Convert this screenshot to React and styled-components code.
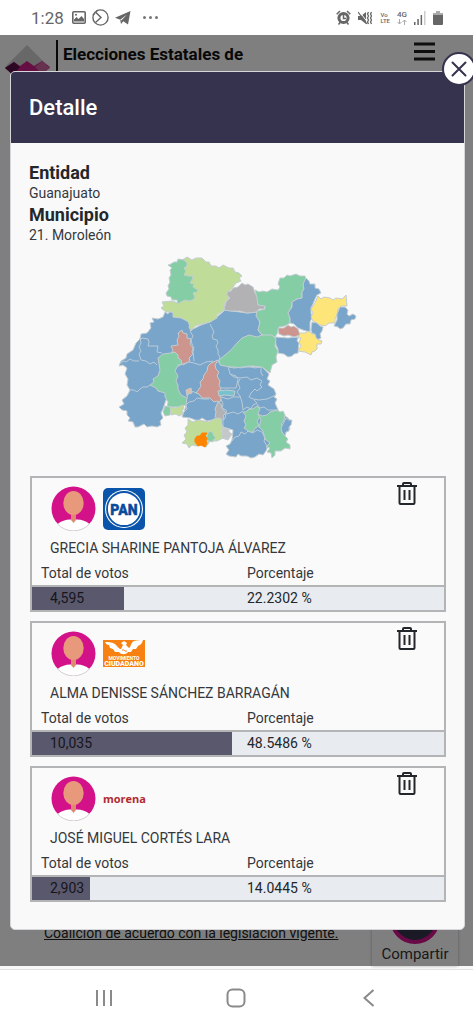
import React from "react";
import { useState } from "react";
import styled, { createGlobalStyle } from "styled-components";

const blue = "#78a5c9";
const green = "#84cda5";
const lime = "#bfdc98";
const gray = "#b2b1b3";
const red = "#cc958d";
const yellow = "#fee57a";

const regions = [
  // western and central block, borders are drawn over it
  { fill: blue, points: "165,312 168,314 170,311 173,313 177,317 181,317 188,321 191,330 201,325 210,322 217,317 225,310 232,311 247,313 257,312 259,320 260,324 258,330 262,335 245,345 230,352 221,365 243,367 262,367 269,374 267,379 270,381 268,385 274,389 276,394 274,397 277,399 275,403 279,412 288,418 292,422 289,425 290,429 286,431 285,435 275,440 268,446 266,451 263,455 259,454 255,457 251,458 247,456 241,456 238,454 236,457 229,456 226,454 229,450 226,446 230,444 232,440 233,430 223,427 219,418 212,420 207,421 202,418 198,421 190,418 182,417 186,406 176,400 166,400 163,409 161,413 163,418 160,421 161,425 157,427 152,426 147,427 144,424 138,427 135,427 133,422 128,421 130,418 127,415 127,411 122,410 119,407 124,404 122,400 127,396 130,390 127,385 128,379 125,374 127,368 123,365 119,366 121,361 126,358 127,354 133,350 136,343 140,339 141,334 147,333 151,328 150,323 154,322 152,318 158,319 163,317" },
  { fill: lime, points: "178,261 184,259 187,257 192,260 196,258 202,258 206,262 209,262 211,266 216,266 219,268 223,265 229,268 233,268 235,272 239,273 242,276 239,278 241,281 236,283 233,287 228,293 229,299 225,302 224,310 217,315 217,318 210,322 201,324 195,326 191,331 189,327 190,324 187,321 181,318 173,317 173,312 166,312 161,308 164,306 162,302 172,301 178,303" },
  { fill: green, points: "168,265 171,264 174,262 177,262 178,259 184,260 187,263 187,266 184,268 186,271 184,275 188,276 193,276 192,280 190,283 194,284 193,287 198,290 197,292 193,293 195,297 193,300 189,301 185,300 181,302 178,304 177,300 172,300 171,297 167,296 166,293 169,289 168,286 170,282 169,278 171,275 170,270 172,268" },
  { fill: gray, points: "242,283 245,285 248,284 253,287 255,293 258,298 258,305 262,305 265,306 264,309 259,309 257,312 247,313 240,311 230,311 224,310 226,302 230,298 227,295 227,292 231,291 233,288 238,287" },
  { fill: green, points: "255,290 259,292 263,291 267,292 272,289 278,290 280,287 278,284 280,278 284,278 287,275 290,276 296,274 300,276 305,276 306,280 303,284 304,289 302,292 302,298 297,299 292,302 291,308 288,313 290,318 290,323 285,326 279,327 277,334 275,337 262,335 258,330 260,322 256,316 257,311 265,309 265,306 258,305 257,298" },
  { fill: blue, points: "306,278 309,281 310,284 315,284 315,288 319,289 321,293 317,295 315,299 313,304 311,308 311,313 312,318 310,322 310,332 303,330 298,328 294,324 290,323 290,318 288,313 292,307 292,302 297,299 302,298 302,292 304,289 303,284" },
  { fill: yellow, points: "318,296 321,299 324,297 330,298 333,300 336,298 342,299 346,295 347,306 342,306 338,309 337,315 335,319 335,323 329,323 325,326 320,325 313,321 311,317 313,313 311,309 315,303" },
  { fill: blue, points: "340,307 345,307 348,310 347,314 349,316 353,314 356,316 355,319 351,320 350,324 346,324 343,328 340,329 338,327 334,326 337,320 337,314" },
  { fill: blue, points: "312,322 317,323 320,326 323,327 322,331 320,334 321,338 317,340 315,335 312,333 311,330" },
  { fill: blue, points: "275,337 288,338 298,337 297,341 299,343 298,353 294,354 292,356 288,357 284,354 278,353 278,349 276,345" },
  { fill: red, points: "278,328 284,328 288,325 291,327 294,326 298,329 300,335 294,337 288,335 284,336 279,334" },
  { fill: yellow, points: "300,333 305,333 309,331 312,334 315,334 316,338 319,340 322,341 321,344 317,344 317,349 315,351 312,352 311,355 305,352 298,351 301,346 299,342 301,338 298,338" },
  { fill: green, points: "242,338 249,335 257,337 262,335 272,335 276,339 275,346 278,351 276,357 277,362 272,365 270,373 266,370 262,367 252,366 243,367 234,368 220,365 219,360 225,355 231,350 237,343" },
  { fill: red, points: "182,330 183,333 187,334 187,338 191,339 190,344 193,348 192,352 193,354 189,358 190,361 183,365 180,363 178,358 176,355 171,354 173,350 171,346 178,345 177,340 179,336 178,333" },
  { fill: green, points: "158,358 163,354 171,353 175,352 178,355 178,358 181,360 182,364 177,367 175,371 178,376 176,381 178,385 178,389 181,395 187,398 186,405 178,407 167,407 168,402 165,397 165,393 158,391 156,388 150,385 154,382 153,379 158,376 160,370" },
  { fill: green, points: "165,406 171,407 170,415 165,416 163,412" },
  { fill: lime, points: "170,407 176,408 183,405 184,408 182,411 183,414 179,416 176,414 171,415" },
  { fill: red, points: "218,360 215,365 216,369 219,372 217,376 220,381 219,385 221,389 219,393 221,398 220,402 217,401 214,402 210,398 202,398 199,394 196,393 199,389 201,386 200,382 203,379 204,375 207,371 208,366 211,363" },
  { fill: "#e5b99d", points: "186,390 191,388 192,393 188,394 187,396" },
  { fill: "#76c3ce", points: "218,391 227,390 235,391 234,396 225,395 219,396" },
  { fill: gray, points: "218,402 221,404 222,408 226,413 223,416 224,419 220,420 215,417 216,412 215,409" },
  { fill: lime, points: "188,419 193,422 197,420 204,421 209,422 214,419 220,418 222,421 221,424 223,427 221,431 223,438 217,441 210,441 206,447 201,445 197,446 192,445 189,448 187,444 182,443 186,439 184,435 187,432 185,428 188,425" },
  { fill: green, points: "208,433 210,431 213,433 214,436 216,438 213,440 213,442 209,441 206,440 207,436" },
  { fill: "#c5c8c9", points: "222,428 229,429 229,432 232,434 230,437 228,440 222,438" },
  { fill: "#ff8500", stroke: "#ff8500", points: "197,436 200,436 202,433 207,433 205,436 207,438 206,441 207,443 205,447 201,445 198,446 195,442 195,439" },
  { fill: green, points: "243,412 246,412 249,409 253,409 257,406 260,409 258,413 260,417 257,421 259,426 255,428 253,432 250,432 244,428 246,425 244,421 246,416" },
  { fill: green, points: "258,414 262,416 267,415 270,412 277,410 280,412 283,411 285,415 284,420 281,424 284,428 282,432 285,436 288,439 286,442 290,445 290,449 285,448 281,451 275,451 275,455 272,458 271,453 267,452 270,448 266,447 270,443 265,439 263,431 259,427 261,420" },
  { fill: blue, points: "286,418 289,420 292,420 291,425 289,427 289,431 286,432 285,436 282,432 281,428" },
];

const borders = [
  "140,340 142,338 148,339 149,342 148,346 153,346 158,346 157,352 162,353",
  "140,338 141,343 139,347 141,351 139,354 141,360 146,361 150,364 154,362 157,365",
  "120,363 124,361 126,362 130,359 134,361 139,361",
  "129,390 134,390 137,392 140,389 143,387 147,387 150,385",
  "190,331 193,336 191,340 192,344 194,348 193,352 194,361",
  "210,324 212,328 214,332 212,336 213,339 217,340 218,343 216,346 218,350 218,354 220,357 218,363",
  "177,365 183,364 189,362 194,363 200,365 206,362 213,361",
  "187,398 188,394 191,391 197,393",
  "184,412 187,409 186,405 189,402 194,401 197,398 203,399 209,399",
  "228,366 229,370 230,374 236,376 238,379 237,384 236,388 220,388",
  "229,367 236,367 241,368 248,366 255,368 261,367 261,373 263,376",
  "230,374 234,377 240,378 247,377 251,380 257,378 262,381 260,385 262,387 257,391 255,389 251,393 249,397 253,399 259,400 267,399 276,395",
  "240,379 238,383 240,388 237,392 240,396 242,402 243,410 247,407 251,409 253,405 257,403 254,400",
  "221,397 228,399 233,397 241,397",
  "221,399 223,404 222,408 226,410 227,414 233,412 238,414 243,411",
  "226,414 225,418 223,421 223,427",
  "257,404 260,408 264,407 268,410 277,410",
  "248,431 245,434 241,432 239,436 235,437 232,441",
  "248,431 253,433 257,430 262,432 265,438 264,441 267,446",
];

const initialCandidates = [
  { id: 1, name: "GRECIA SHARINE PANTOJA ÁLVAREZ", party: "pan", votes: "4,595", percent: 22.2302 },
  { id: 2, name: "ALMA DENISSE SÁNCHEZ BARRAGÁN", party: "mc", votes: "10,035", percent: 48.5486 },
  { id: 3, name: "JOSÉ MIGUEL CORTÉS LARA", party: "morena", votes: "2,903", percent: 14.0445 },
];

function StatusBar() {
  return (
    <Status>
      <StatusGroup>
        <Clock>1:28</Clock>
        <svg width="14" height="13" viewBox="0 0 14 13">
          <rect x="0.8" y="0.8" width="12.4" height="11.4" rx="1" fill="none" stroke="#666" strokeWidth="1.6" />
          <path d="M2 10.5V8.5L4.5 6l2 2 3-3L12 8v2.500z" fill="#666" />
          <circle cx="4" cy="3.800" r="1" fill="#666" />
        </svg>
        <svg width="17" height="17" viewBox="0 0 17 17" fill="none" stroke="#666" strokeWidth="1.4">
          <circle cx="8.500" cy="8.500" r="7.600" />
          <path d="M5 1.500l-1 2 5 5-5.500 5M.8 6.500L3 4" />
        </svg>
        <svg width="16" height="14" viewBox="0 0 16 14">
          <path d="M0 6.800L15.500 0 13 13.500 8.300 10.300 6 13 5.200 8.700z" fill="#666" />
          <path d="M5.200 8.700L12 3.600 6.300 9.400" fill="#fff" />
        </svg>
        <Dots><i /><i /><i /></Dots>
      </StatusGroup>
      <StatusGroup $tight>
        <svg width="15" height="15" viewBox="0 0 15 15" fill="none" stroke="#666">
          <circle cx="7.500" cy="8" r="4.600" strokeWidth="3" />
          <path d="M.7 4.200l3.300-3.200M14.300 4.200l-3.300-3.200M2.500 14.500l2-2.500M12.500 14.500l-2-2.500M7.500 5V8.500H10" strokeWidth="1.500" />
        </svg>
        <svg width="15" height="14" viewBox="0 0 15 14">
          <path d="M0 5h3l5-4v12L3 9H0z" fill="#666" />
          <path d="M1 0l9 12" stroke="#fff" strokeWidth="1" />
          <path d="M0 1l9 12" stroke="#666" strokeWidth="1.200" />
          <path d="M10.500 1l-1 2 1 2-1 2 1 2-1 2 1 2M13.500 1l-1 2 1 2-1 2 1 2-1 2 1 2" fill="none" stroke="#666" strokeWidth="1.300" />
        </svg>
        <Tiny><span>Vo</span><span>LTE</span></Tiny>
        <Network>
          4G
          <svg width="10" height="6" viewBox="0 0 10 6" fill="none" stroke="#aaa">
            <path d="M2.500 0v5M.5 3l2 2 2-2M7.500 6V1M5.500 3l2-2 2 2" />
          </svg>
        </Network>
        <svg width="12" height="14" viewBox="0 0 12 14">
          <path d="M0 11h1.500v3H0zM3.300 8h1.500v6H3.300zM6.600 4h1.500v10H6.600z" fill="#666" />
          <path d="M10 0h1.500v14H10z" fill="#ccc" />
        </svg>
        <svg width="10" height="14" viewBox="0 0 10 14">
          <path d="M3 0h4v2h3v3H0V2h3z" fill="#aaa" />
          <path d="M0 4h10v9a1 1 0 0 1-1 1H1a1 1 0 0 1-1-1z" fill="#666" />
        </svg>
      </StatusGroup>
    </Status>
  );
}

function MunicipalityMap() {
  return (
    <MapFigure>
      <svg viewBox="118 256 240 204" role="img" aria-label="Mapa de Guanajuato">
        {regions.map((item, index) => (
          <polygon
            key={index}
            points={item.points}
            fill={item.fill}
            stroke={item.stroke || "#c3cdd2"}
            strokeWidth="1"
            strokeLinejoin="round"
          />
        ))}
        {borders.map((item, index) => (
          <polyline key={index} points={item} fill="none" stroke="#b9cbd8" strokeWidth="1" strokeLinejoin="round" />
        ))}
      </svg>
    </MapFigure>
  );
}

function Avatar() {
  return (
    <svg width="45" height="45" viewBox="0 0 45 45">
      <circle cx="22.500" cy="22.500" r="22" fill="#d3128a" />
      <path d="M6.500 38C10 35 15 33.500 19 33.500h7c5 0 9 1.500 12.500 4.500a22 22 0 0 1-32 0z" fill="#fff" />
      <path d="M6.500 38a22 22 0 0 0 32 0" fill="none" stroke="#bbb" strokeWidth="0.600" />
      <path d="M20 24h5v10l-2.500 3-2.500-3z" fill="#dd8a6d" />
      <ellipse cx="22.500" cy="17" rx="10.200" ry="12" fill="#e8987b" />
    </svg>
  );
}

function PartyLogo({ party }) {
  if (party === "pan") {
    return (
      <svg width="42" height="42" viewBox="0 0 42 42" role="img" aria-label="PAN">
        <rect width="42" height="42" rx="5" fill="#0a55ab" />
        <circle cx="21" cy="21" r="19" fill="#fff" />
        <circle cx="21" cy="21" r="17" fill="#fff" stroke="#0a55ab" strokeWidth="1.800" />
        <text x="21" y="26.500" textAnchor="middle" fontFamily="Roboto, 'Liberation Sans', sans-serif" fontWeight="900" fontSize="14" fill="#0a4b9c" stroke="#0a4b9c" strokeWidth="0.400">PAN</text>
      </svg>
    );
  }
  if (party === "mc") {
    return (
      <svg width="42" height="27" viewBox="0 0 42 27" role="img" aria-label="Movimiento Ciudadano">
        <rect width="42" height="27" fill="#f78212" />
        <path d="M2 2c4 0 8 0 11 3 2 2 3 4 5 4l2-4-2-2 3-2 3 2-1 2 3 3c2-1 2-6 5-7 3-1 6-1 9-1-1 4-3 5-5 6l-2 3-3 0-2 3-3 0c-2 3-7 3-9 0l-4 0-2-3-3-1-1-3C4 5 3 4 2 2z" fill="#fff" />
        <path d="M19 10c2-1 3 2 5 1" fill="none" stroke="#f78212" />
        <text x="21" y="20" textAnchor="middle" fontFamily="Roboto, sans-serif" fontWeight="700" fontSize="5" fill="#fff">MOVIMIENTO</text>
        <text x="21" y="26" textAnchor="middle" fontFamily="Roboto, sans-serif" fontWeight="900" fontSize="7" fill="#fff">CIUDADANO</text>
      </svg>
    );
  }
  return <Morena>morena</Morena>;
}

function TrashIcon() {
  return (
    <svg width="20" height="23" viewBox="0 0 20 23" fill="none" stroke="#23272b" strokeWidth="2">
      <path d="M0 4h20M6 4V2a1 1 0 0 1 1-1h6a1 1 0 0 1 1 1v2" />
      <path d="M2.500 4v17a1 1 0 0 0 1 1h13a1 1 0 0 0 1-1V4" />
      <path d="M7.500 8v10M12.500 8v10" />
    </svg>
  );
}

function CandidateCard({ candidate, onRemove }) {
  return (
    <Card>
      <CardTop>
        <Avatar />
        <PartyLogo party={candidate.party} />
        <TrashButton type="button" aria-label={`Eliminar ${candidate.name}`} onClick={() => onRemove(candidate.id)}>
          <TrashIcon />
        </TrashButton>
      </CardTop>
      <Name>{candidate.name}</Name>
      <Labels>
        <span>Total de votos</span>
        <span>Porcentaje</span>
      </Labels>
      <Values>
        <Bar style={{ width: `${candidate.percent}%` }} />
        <Votes>{candidate.votes}</Votes>
        <Percent>{candidate.percent} %</Percent>
      </Values>
    </Card>
  );
}

function PageBehind() {
  return (
    <Behind>
      <PageHeader>
        <svg width="56" height="48" viewBox="0 0 56 48">
          <path d="M27 10L49 32 27 44 5 32z" fill="#d0d0d0" />
          <path d="M5 33l9-6 6 4 7-5 7 5 8-5 8 6-14 12H18z" fill="#cd1f88" />
          <path d="M5 33l9-6 6 5-7 8z" fill="#58104a" />
          <path d="M35 32l7-6 8 7-8 6z" fill="#ce63a0" />
        </svg>
        <PageTitle>Elecciones Estatales de</PageTitle>
        <MenuButton type="button" aria-label="Menú">
          <svg width="21" height="19" viewBox="0 0 21 19" stroke="#1d1d1d" strokeWidth="3">
            <path d="M0 2h21M0 9.500h21M0 17h21" />
          </svg>
        </MenuButton>
      </PageHeader>
      <PageFooter>
        <Legal href="#coalicion">Coalición de acuerdo con la legislación vigente.</Legal>
        <Share type="button">
          <ShareCircle />
          Compartir
        </Share>
      </PageFooter>
    </Behind>
  );
}

function App() {
  const [open, setOpen] = useState(true);
  const [candidates, setCandidates] = useState(initialCandidates);

  const handleRemove = (id) => {
    setCandidates(candidates.filter((item) => item.id !== id));
  };

  return (
    <Screen>
      <GlobalStyle />
      <StatusBar />
      <Stage>
        <PageBehind />
        {open ? (
          <Backdrop>
            <Modal role="dialog" aria-label="Detalle">
              <CloseButton type="button" aria-label="Cerrar" onClick={() => setOpen(false)}>
                <svg width="16" height="16" viewBox="0 0 16 16" stroke="#35334d" strokeWidth="2" strokeLinecap="round">
                  <path d="M1.500 1.500l13 13M14.500 1.500l-13 13" />
                </svg>
              </CloseButton>
              <ModalHeader><h1>Detalle</h1></ModalHeader>
              <ModalBody>
                <Place>
                  <h2>Entidad</h2>
                  <p>Guanajuato</p>
                  <h2>Municipio</h2>
                  <p>21. Moroleón</p>
                </Place>
                <MunicipalityMap />
                <CardList>
                  {candidates.map((item) => (
                    <CandidateCard key={item.id} candidate={item} onRemove={handleRemove} />
                  ))}
                </CardList>
              </ModalBody>
            </Modal>
          </Backdrop>
        ) : null}
      </Stage>
      <NavBar>
        <NavButton type="button" aria-label="Recientes">
          <svg width="18" height="18" viewBox="0 0 18 18" stroke="#8a8a8a" strokeWidth="2"><path d="M2 1v16M9 1v16M16 1v16" /></svg>
        </NavButton>
        <NavButton type="button" aria-label="Inicio">
          <svg width="20" height="20" viewBox="0 0 20 20" fill="none" stroke="#8a8a8a" strokeWidth="2"><rect x="1.500" y="1.500" width="17" height="17" rx="5" /></svg>
        </NavButton>
        <NavButton type="button" aria-label="Atrás">
          <svg width="18" height="18" viewBox="0 0 18 18" fill="none" stroke="#8a8a8a" strokeWidth="2"><path d="M13.500 1L4.500 9l9 8" /></svg>
        </NavButton>
      </NavBar>
    </Screen>
  );
}

export default App;

const GlobalStyle = createGlobalStyle`
  * {
    box-sizing: border-box;
  }
  body {
    margin: 0;
    background: #fff;
    font-family: Roboto, "Liberation Sans", sans-serif;
    font-size: 14px;
    line-height: 20px;
    color: #34383c;
  }
  h1, h2, h3, p, figure, ul {
    margin: 0;
    padding: 0;
  }
  button {
    padding: 0;
    border: 0;
    background: none;
    font: inherit;
    color: inherit;
    cursor: pointer;
  }
  svg {
    display: block;
    flex-shrink: 0;
  }
`;

const Screen = styled.div`
  min-height: 100vh;
  display: flex;
  flex-direction: column;
  overflow: hidden;
`;

const Status = styled.header`
  height: 35px;
  padding: 0 30px 0 31px;
  display: flex;
  align-items: center;
  justify-content: space-between;
  color: #666;
`;

const StatusGroup = styled.div`
  display: flex;
  align-items: center;
  gap: ${(props) => (props.$tight ? "7px" : "6px")};
`;

const Clock = styled.span`
  margin-right: 2px;
  font-size: 17px;
`;

const Dots = styled.span`
  margin-left: 6px;
  display: flex;
  gap: 3px;
  i {
    width: 3px;
    height: 3px;
    border-radius: 50%;
    background: #777;
  }
`;

const Tiny = styled.span`
  display: flex;
  flex-direction: column;
  font-size: 6px;
  font-weight: 500;
  line-height: 6px;
`;

const Network = styled.span`
  display: flex;
  flex-direction: column;
  align-items: center;
  font-size: 8px;
  font-weight: 500;
  line-height: 9px;
`;

const Stage = styled.main`
  flex: 1;
  display: grid;
  border-bottom: 3px solid #f8f8f8;
  > * {
    grid-area: 1 / 1;
    min-width: 0;
  }
`;

const Behind = styled.div`
  display: flex;
  flex-direction: column;
  justify-content: space-between;
`;

const PageHeader = styled.div`
  display: flex;
  align-items: flex-start;
`;

const PageTitle = styled.h3`
  margin-top: 5px;
  padding: 2px 0 12px 5px;
  border-left: 2px solid #111;
  font-size: 17px;
  line-height: 24px;
  color: #111;
`;

const MenuButton = styled.button`
  margin: 7px 38px 0 auto;
`;

const PageFooter = styled.div`
  padding: 0 15px 0 44px;
  display: flex;
  align-items: flex-end;
  justify-content: space-between;
`;

const Legal = styled.a`
  padding-bottom: 23px;
  font-size: 14px;
  color: #222;
  white-space: nowrap;
`;

const Share = styled.button`
  width: 86px;
  padding-bottom: 2px;
  display: flex;
  flex-direction: column;
  align-items: center;
  box-shadow: 0 0 3px rgba(0, 0, 0, 0.3);
  font-size: 15px;
  color: #333;
`;

const ShareCircle = styled.span`
  width: 50px;
  height: 50px;
  border: 4px solid #d3128a;
  border-radius: 50%;
  background: #35334d;
`;

const Backdrop = styled.div`
  z-index: 1;
  padding: 36px 8px 36px 10px;
  background: rgba(0, 0, 0, 0.5);
`;

const Modal = styled.section`
  position: relative;
  border: 1px solid #d5d5da;
  border-radius: 5px;
  background: #f9f9fa;
`;

const CloseButton = styled.button`
  position: absolute;
  top: -20px;
  right: -12px;
  width: 34px;
  height: 34px;
  display: flex;
  align-items: center;
  justify-content: center;
  border: 2px solid #35334d;
  border-radius: 50%;
  background: #fff;
`;

const ModalHeader = styled.div`
  padding: 20px 18px;
  border-radius: 4px 4px 0 0;
  background: #35334d;
  color: #fff;
  h1 {
    font-size: 22px;
    font-weight: 500;
    line-height: 31px;
  }
`;

const ModalBody = styled.div`
  padding: 20px 18px 27px;
`;

const Place = styled.div`
  h2 {
    font-size: 18px;
    font-weight: 700;
    line-height: 20px;
    color: #23272b;
  }
  p {
    margin-bottom: 2px;
  }
`;

const MapFigure = styled.figure`
  padding: 9px 0 16px;
  svg {
    width: 240px;
    height: 204px;
    margin: 0 auto;
  }
`;

const CardList = styled.div`
  margin-left: 1px;
  display: flex;
  flex-direction: column;
  gap: 9px;
`;

const Card = styled.article`
  border: 2px solid #b3b4b6;
  background: #fafafb;
`;

const CardTop = styled.div`
  padding: 8px 27px 0 19px;
  display: flex;
  align-items: center;
  gap: 7px;
`;

const Morena = styled.span`
  font-family: "Open Sans", "Noto Sans", sans-serif;
  font-size: 11px;
  font-weight: 700;
  color: #b02a30;
`;

const TrashButton = styled.button`
  margin-left: auto;
  align-self: flex-start;
  margin-top: -4px;
`;

const Name = styled.p`
  padding: 7px 18px 5px;
`;

const Labels = styled.div`
  padding-bottom: 2px;
  display: grid;
  grid-template-columns: 1fr 1fr;
  border-bottom: 2px solid #b3b4b6;
  span {
    padding-left: 9px;
  }
`;

const Values = styled.div`
  position: relative;
  display: grid;
  grid-template-columns: 1fr 1fr;
  background: #e8ebef;
  line-height: 23px;
  color: #23272b;
`;

const Bar = styled.div`
  position: absolute;
  top: 0;
  bottom: 0;
  left: 0;
  background: #5a586d;
`;

const Votes = styled.span`
  position: relative;
  padding-left: 18px;
  color: #15151c;
`;

const Percent = styled.span`
  position: relative;
  padding-left: 9px;
`;

const NavBar = styled.nav`
  height: 55px;
  padding: 2px 38px 0;
  display: grid;
  grid-template-columns: repeat(3, 1fr);
  border-top: 1px solid #e2e2e2;
`;

const NavButton = styled.button`
  display: flex;
  align-items: center;
  justify-content: center;
`;
